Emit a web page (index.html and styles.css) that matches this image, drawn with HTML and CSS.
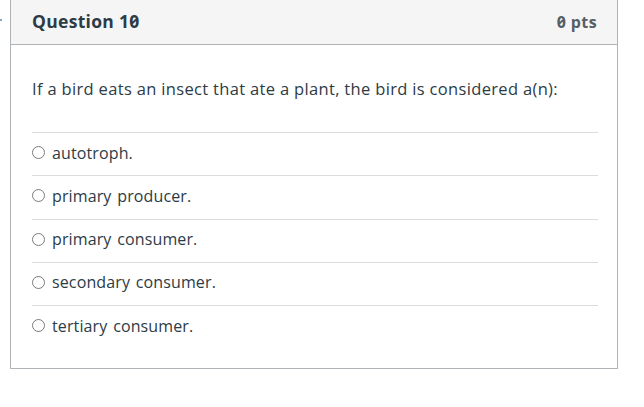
FILE: index.html
```html
<!DOCTYPE html>
<html>
<head>
<meta charset="utf-8">
<link rel="stylesheet" href="styles.css">
</head>
<body>
<span class="edge-mark"></span>
<div class="question">
  <div class="q-header">
    <h2 class="q-title">Question 1<span class="zero">0</span></h2>
    <span class="q-pts"><span class="zero">0</span> pts</span>
  </div>
  <div class="q-body">
    <p class="q-text">If a bird eats an insect that ate a plant, the bird is considered a(n):</p>
    <ul class="answers">
      <li class="answer"><span class="radio"></span><span class="label">autotroph.</span></li>
      <li class="answer"><span class="radio"></span><span class="label">primary producer.</span></li>
      <li class="answer"><span class="radio"></span><span class="label">primary consumer.</span></li>
      <li class="answer"><span class="radio"></span><span class="label">secondary consumer.</span></li>
      <li class="answer"><span class="radio"></span><span class="label">tertiary consumer.</span></li>
    </ul>
  </div>
</div>
</body>
</html>
```
FILE: styles.css
```css
html, body {
  margin: 0;
  padding: 0;
  background: #ffffff;
}
body {
  font-family: "Open Sans", "Noto Sans", sans-serif;
  color: #2d3b45;
  position: relative;
}
.edge-mark {
  position: absolute;
  left: 0;
  top: 19px;
  width: 2px;
  height: 2px;
  background: #8aa7c0;
}
.question {
  margin: -1px 0 0 10px;
  width: 606px;
  border: 1px solid #aeb4b8;
  background: #fff;
}
.q-header {
  display: flex;
  justify-content: space-between;
  align-items: center;
  height: 44px;
  padding: 0 20px 0 21px;
  background: #f5f5f5;
  border-bottom: 1px solid #aeb4b8;
}
.q-title {
  margin: 0 0 3px 0;
  font-size: 17.5px;
  letter-spacing: 0.3px;
  font-weight: 700;
  color: #2d3b45;
}
.q-pts {
  font-size: 16px;
  letter-spacing: 0.4px;
  font-weight: 700;
  color: #555f66;
}
.zero {
  font-variant-numeric: slashed-zero;
}
.q-body {
  padding: 32px 19px 20px 21px;
}
.q-text {
  margin: 0 0 31px 0;
  font-size: 16.5px;
  letter-spacing: 0.33px;
  line-height: 24px;
  color: #2d3b45;
}
.answers {
  list-style: none;
  margin: 0;
  padding: 0;
}
.answer {
  box-sizing: border-box;
  display: flex;
  align-items: center;
  gap: 7px;
  height: 43.25px;
  padding-bottom: 3px;
  border-top: 1px solid #dcdcdc;
  font-size: 16px;
  letter-spacing: 0.12px;
  word-spacing: 1.5px;
  color: #2d3b45;
}
.radio {
  width: 11px;
  height: 11px;
  border: 1px solid #7b7b7b;
  border-radius: 50%;
  flex: none;
}
```
